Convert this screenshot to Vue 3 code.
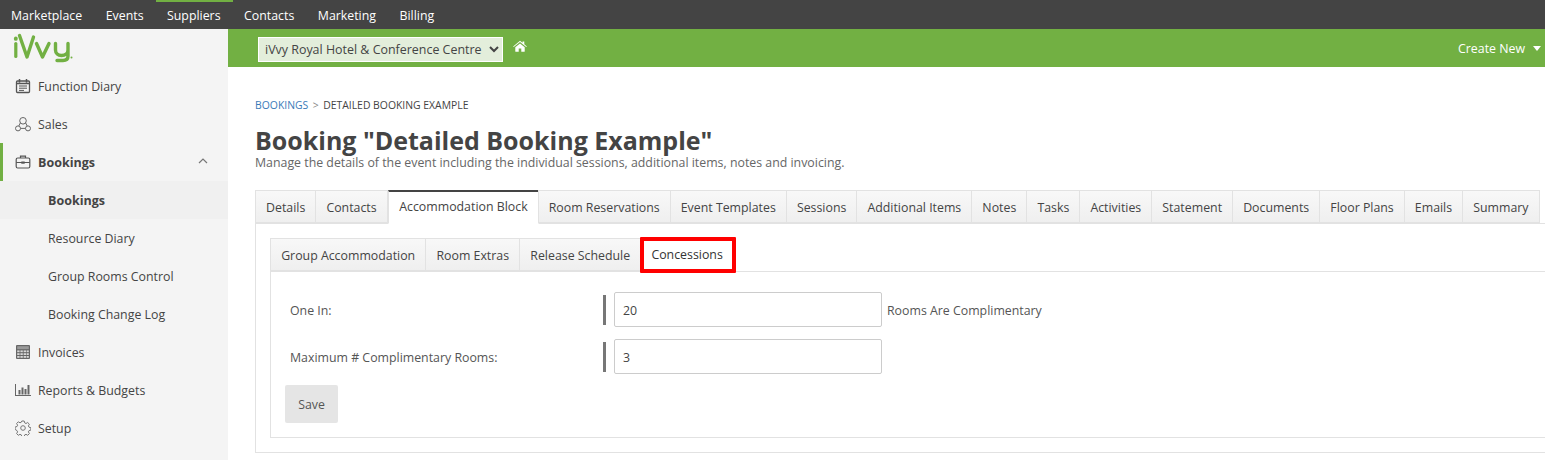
<script setup>
const topNav = [
  { label: 'Marketplace' }, { label: 'Events' }, { label: 'Suppliers', active: true },
  { label: 'Contacts' }, { label: 'Marketing' }, { label: 'Billing' }
]
const mainTabs = ['Details', 'Contacts', 'Accommodation Block', 'Room Reservations', 'Event Templates', 'Sessions', 'Additional Items', 'Notes', 'Tasks', 'Activities', 'Statement', 'Documents', 'Floor Plans', 'Emails', 'Summary']
const subTabs = ['Group Accommodation', 'Room Extras', 'Release Schedule', 'Concessions']
</script>

<template>
  <div class="page">
    <nav class="topbar">
      <a v-for="n in topNav" :key="n.label" class="top-link" :class="{ on: n.active }">{{ n.label }}</a>
    </nav>
    <div class="shell">
      <aside class="side">
        <div class="logo">
          <svg width="62" height="34" viewBox="0 0 62 34" fill="none" stroke="#72b043" stroke-linecap="round" stroke-linejoin="round">
            <path d="M2.800 14.500v13" stroke-width="3.200"/>
            <path d="M2.800 9.500v.4" stroke-width="3.800"/>
            <path d="M6.500 6.500l7.500 21.500L20.500 8" stroke-width="3.400"/>
            <path d="M23.500 14.500l6 13.500 6.500-13.500" stroke-width="3.400"/>
            <path d="M42.500 14.500v6.500c0 3.500 2.500 5.500 6 5.500s6.500-2 6.500-5.500v-6.500M55 14.500v12.500c0 3-2 4.500-5 4.500h-6" stroke-width="3.400"/>
            <circle cx="58.500" cy="28.500" r="1" fill="#72b043" stroke="none"/>
          </svg>
        </div>
        <a class="item">
          <svg class="ico" viewBox="0 0 16 16" fill="none" stroke="#555" stroke-width="1.300"><rect x="1.500" y="3" width="13" height="11.500" rx="1"/><path d="M4.500 1v3.500M11.500 1v3.500M1.500 5.500h13" stroke-width="1.500"/><path d="M4 8h8M4 10.200h8M4 12.400h5" stroke-width="1"/></svg>
          <span>Function Diary</span>
        </a>
        <a class="item">
          <svg class="ico" viewBox="0 0 16 16" fill="none" stroke="#666" stroke-width="1"><circle cx="8" cy="4.800" r="3.300"/><circle cx="3" cy="12.400" r="2.500"/><circle cx="13" cy="12.400" r="2.500"/><path d="M5.500 12.400h5M5.400 6.800L3.800 10M10.600 6.800l1.600 3.200"/></svg>
          <span>Sales</span>
        </a>
        <a class="item current">
          <svg class="ico" viewBox="0 0 16 16" fill="none" stroke="#555" stroke-width="1.200"><rect x="1.200" y="4" width="13.600" height="10" rx="1.500"/><path d="M5.500 4V2.200h5V4M1.200 8.500h13.600"/><rect x="6.300" y="7.500" width="3.400" height="2.200" fill="#555" stroke="none"/></svg>
          <span>Bookings</span>
          <svg class="chev" viewBox="0 0 10 6" fill="none" stroke="#777" stroke-width="1.200"><path d="M1 5l4-4 4 4"/></svg>
        </a>
        <a class="sub strong">Bookings</a>
        <a class="sub">Resource Diary</a>
        <a class="sub">Group Rooms Control</a>
        <a class="sub">Booking Change Log</a>
        <a class="item">
          <svg class="ico" viewBox="0 0 16 16"><rect x="1" y="1" width="14" height="14" rx="1" fill="#666"/><rect x="2.200" y="2.200" width="11.600" height="3" fill="#999"/><g fill="#d8d8d8"><rect x="2.200" y="6.400" width="2.400" height="1.800"/><rect x="5.400" y="6.400" width="2.400" height="1.800"/><rect x="8.600" y="6.400" width="2.400" height="1.800"/><rect x="11.600" y="6.400" width="2.200" height="1.800"/><rect x="2.200" y="9.200" width="2.400" height="1.800"/><rect x="5.400" y="9.200" width="2.400" height="1.800"/><rect x="8.600" y="9.200" width="2.400" height="1.800"/><rect x="11.600" y="9.200" width="2.200" height="1.800"/><rect x="2.200" y="12" width="2.400" height="1.800"/><rect x="5.400" y="12" width="2.400" height="1.800"/><rect x="8.600" y="12" width="2.400" height="1.800"/><rect x="11.600" y="12" width="2.200" height="1.800"/></g></svg>
          <span>Invoices</span>
        </a>
        <a class="item">
          <svg class="ico" viewBox="0 0 16 16" fill="#666"><path d="M0 2h1v11h16v1H0z"/><rect x="3.500" y="8" width="2" height="4.500"/><rect x="6.500" y="5.500" width="2" height="7"/><rect x="9.500" y="7" width="2" height="5.500"/><rect x="12.500" y="3" width="2" height="9.500"/></svg>
          <span>Reports &amp; Budgets</span>
        </a>
        <a class="item">
          <svg class="ico" viewBox="0 0 16 16" fill="none" stroke="#777" stroke-width="1"><circle cx="8" cy="8" r="2.300"/><path d="M6.800 1h2.400l.5 1.900 1.300.6 1.700-1 1.700 1.700-1 1.700.6 1.300 1.900.5v2.400l-1.900.5-.6 1.300 1 1.700-1.700 1.700-1.700-1-1.300.6-.5 1.900H6.800l-.5-1.900-1.300-.6-1.700 1-1.700-1.700 1-1.700-.6-1.300L.1 9.400V7l1.900-.5.6-1.300-1-1.700 1.700-1.700 1.700 1 1.300-.6z"/></svg>
          <span>Setup</span>
        </a>
      </aside>

      <div class="right">
        <header class="greenbar">
          <select class="venue"><option>iVvy Royal Hotel &amp; Conference Centre</option></select>
          <svg class="home" viewBox="0 0 16 14" fill="#fff"><path d="M8 .8l3 2.500V1.800h2v3.200l3 2.500-.7.800L8 2.400.7 8.300 0 7.500zM2.500 8.500L8 4l5.500 4.500V13a.6.600 0 0 1-.6.600H9.500V10h-3v3.600H3.100a.6.600 0 0 1-.6-.6z"/></svg>
          <a class="create">Create New<i class="caret"></i></a>
        </header>

        <main class="main">
          <div class="crumbs"><a class="crumb-link">BOOKINGS</a><span class="sep">&gt;</span><span>DETAILED BOOKING EXAMPLE</span></div>
          <h1 class="title">Booking "Detailed Booking Example"</h1>
          <p class="desc">Manage the details of the event including the individual sessions, additional items, notes and invoicing.</p>

          <div class="tabs">
            <a v-for="t in mainTabs" :key="t" class="tab" :class="{ active: t === 'Accommodation Block' }">{{ t }}</a>
          </div>
          <section class="panel">
            <div class="subtabs">
              <a v-for="t in subTabs" :key="t" class="subtab" :class="{ active: t === 'Concessions' }">
                {{ t }}<i v-if="t === 'Concessions'" class="mark"></i>
              </a>
            </div>
            <div class="subpanel">
              <div class="row">
                <label class="lbl">One In:</label>
                <i class="req"></i>
                <input class="field" value="20" />
                <span class="after">Rooms Are Complimentary</span>
              </div>
              <div class="row">
                <label class="lbl">Maximum # Complimentary Rooms:</label>
                <i class="req"></i>
                <input class="field" value="3" />
              </div>
              <button class="save">Save</button>
            </div>
          </section>
        </main>
      </div>
    </div>
  </div>
</template>

<style>
html, body { margin: 0; background: #fff; overflow: hidden; }
</style>

<style scoped>
.page { width: 1545px; height: 460px; overflow: hidden; font-family: "Open Sans", sans-serif; font-size: 12.35px; color: #444; }
.topbar { height: 29px; background: #444; display: flex; }
.top-link { color: #fff; line-height: 31px; padding: 0 12.5px 0 11px; box-sizing: border-box; height: 29px; }
.top-link.on { box-shadow: inset 0 2px 0 #72b043; }
.shell { display: flex; height: 431px; }
.side { width: 228px; flex: none; background: #f4f4f4; }
.logo { height: 38px; padding-left: 13px; box-sizing: border-box; }
.logo svg { display: block; }
.item { height: 38px; display: flex; align-items: center; padding-left: 15px; color: #444; position: relative; }
.ico { width: 16px; height: 16px; margin-right: 7px; flex: none; }
.item.current { font-weight: 700; font-size: 12.5px; box-shadow: inset 3px 0 0 #72b043; }
.chev { width: 10px; height: 6px; position: absolute; left: 198px; top: 15px; }
.sub { display: flex; height: 38px; align-items: center; padding-left: 48px; color: #444; }
.sub.strong { font-weight: 700; font-size: 12.5px; background: #f0f0f0; }
.right { flex: 1; min-width: 0; }
.greenbar { height: 38px; background: #72b043; display: flex; align-items: center; padding-left: 30px; }
.venue { width: 245px; height: 25px; background: #e3eedb; border: 1px solid #fff; color: #444; font: 12.45px "Open Sans", sans-serif; padding: 0 0 0 2px; margin-top: 2px; }
.home { width: 14px; height: 12px; margin-left: 10px; margin-top: -4px; }
.create { margin-left: auto; color: #fff; display: flex; align-items: center; margin-right: 4px; }
.caret { width: 0; height: 0; border: 4.5px solid transparent; border-top: 5px solid #fff; border-bottom: 0; margin-left: 8px; }
.main { padding: 31px 0 0 27px; }
.crumbs { font-size: 10.4px; line-height: 14px; color: #444; display: flex; }
.crumb-link { color: #3a7ab8; }
.sep { margin: 0 4.5px; color: #888; }
.title { margin: 12px 0 0; font-size: 25px; line-height: 32px; font-weight: 700; color: #444; }
.desc { margin: 0; font-size: 12.35px; line-height: 14px; color: #666; }
.tabs { display: flex; margin-top: 20px; height: 33px; position: relative; z-index: 1; }
.tab { box-sizing: border-box; height: 33px; line-height: 34px; padding: 0 10.05px; background: linear-gradient(#f8f8f8, #efefef); border: 1px solid #e2e2e2; margin-right: -1px; color: #444; white-space: nowrap; }
.tab.active { background: #fff; border-top: 2px solid #444; border-bottom-color: #fff; line-height: 30px; height: 34px; margin-left: 1.5px; }
.panel { border: 1px solid #e2e2e2; margin-right: -20px; padding: 14px 0 14px 14px; height: 230px; box-sizing: border-box; }
.subtabs { display: flex; height: 33px; position: relative; z-index: 1; }
.subtab { box-sizing: border-box; height: 33px; line-height: 34px; padding: 0 10.14px; background: linear-gradient(#f8f8f8, #efefef); border: 1px solid #e2e2e2; margin-right: -1px; color: #444; white-space: nowrap; position: relative; }
.subtab.active { background: #fff; border-bottom-color: #fff; line-height: 31px; height: 34px; color: #333; }
.mark { position: absolute; left: -1px; top: -2px; right: -3px; bottom: -2px; border: 4px solid #f00; border-radius: 1px; }
.subpanel { border: 1px solid #e2e2e2; height: 167px; box-sizing: border-box; padding: 20px 0 0 14px; position: relative; }
.row { display: flex; align-items: center; height: 35px; margin-bottom: 12px; }
.lbl { width: 318px; flex: none; color: #555; padding: 2px 0 0 5px; box-sizing: border-box; }
.req { width: 3px; height: 30px; background: #777; margin-right: 8px; flex: none; }
.field { width: 268px; height: 35px; box-sizing: border-box; border: 1px solid #ccc; border-radius: 2px; padding: 2px 8px 0; font: 12.35px "Open Sans", sans-serif; color: #444; outline: none; }
.after { margin-left: 5px; color: #555; padding-top: 2px; }
.save { width: 53px; height: 38px; border: 0; background: #e5e5e5; border-radius: 2px; font: 12.35px "Open Sans", sans-serif; color: #555; padding: 0; display: block; margin-top: -1px; }
</style>
